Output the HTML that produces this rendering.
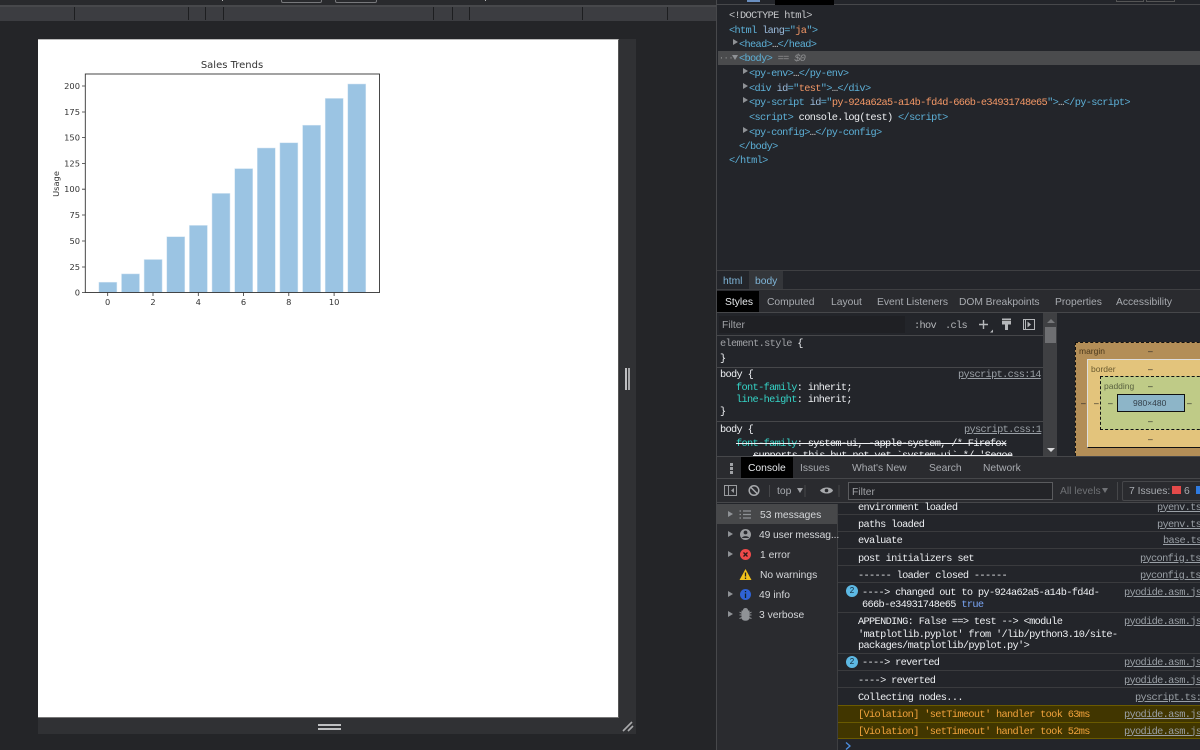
<!DOCTYPE html>
<html lang="en">
<head>
<meta charset="utf-8">
<title>DevTools</title>
<style>
html,body{margin:0;padding:0;width:1200px;height:750px;overflow:hidden;background:#242528}
body{position:relative;font-family:"Liberation Sans",sans-serif;font-size:10px;color:#c4c7c5}
div,span.a{position:absolute;box-sizing:border-box}
.t{position:absolute;white-space:pre;line-height:14px;height:14px}
.m{font-family:"Liberation Mono",monospace;font-size:10.3px;letter-spacing:-.66px;color:#eef0f3;margin-top:1.5px}
.s{font-family:"Liberation Sans",sans-serif;font-size:10.3px;color:#a8abb0;margin-top:1px}
.b{margin-top:0}
.tag{color:#5db0d7}.val{color:#f29766}.att{color:#9bbbdc}
.lnk{color:#9aa0a6;text-decoration:underline}
.prop{color:#35d4c7}
.tri{position:absolute;width:0;height:0;border-left:5px solid #8f9296;border-top:3.5px solid transparent;border-bottom:3.5px solid transparent}
.trid{position:absolute;width:0;height:0;border-top:5px solid #8f9296;border-left:3.5px solid transparent;border-right:3.5px solid transparent}
.ln{position:absolute;left:838px;right:0;height:1px;background:#3a3b3e}
.bar{position:absolute;background:#1d1e20;top:7px;width:1px;height:13px}
</style>
</head>
<body>
<!-- top browser strip -->
<div style="left:0;top:0;width:716px;height:5px;background:#292a2d"></div>
<div style="left:0;top:5px;width:716px;height:2px;background:#47484b"></div>
<div style="left:0;top:7px;width:716px;height:14px;background:#3c3d41"></div>
<div class="bar" style="left:74px"></div><div class="bar" style="left:188px"></div><div class="bar" style="left:205px"></div><div class="bar" style="left:223px"></div><div class="bar" style="left:433px"></div><div class="bar" style="left:452px"></div><div class="bar" style="left:469px"></div><div class="bar" style="left:582px"></div><div class="bar" style="left:667px"></div>
<div style="left:281px;top:-3px;width:41px;height:6px;border:1px solid #77787b;border-radius:2px"></div>
<div style="left:335px;top:-3px;width:42px;height:6px;border:1px solid #77787b;border-radius:2px"></div>
<div style="left:222px;top:0;width:1px;height:1px;background:#bbb"></div>
<div style="left:485px;top:0;width:1px;height:1px;background:#bbb"></div>

<!-- device frame -->
<div style="left:618px;top:39px;width:18px;height:695px;background:#303134"></div>
<div style="left:38px;top:717px;width:598px;height:17px;background:#303134"></div>
<div style="left:38px;top:39px;width:580.5px;height:678.5px;background:#fff;border-top:1px solid #bbb;border-right:1px solid #555;border-bottom:1px solid #777"></div>
<div style="left:625px;top:368px;width:2.3px;height:22px;background:#bfc0c2"></div>
<div style="left:628.3px;top:368px;width:2px;height:22px;background:#a9aaac"></div>
<div style="left:318px;top:724px;width:23px;height:2px;background:#bfc0c2"></div>
<div style="left:318px;top:728px;width:23px;height:2px;background:#bfc0c2"></div>
<svg style="position:absolute;left:620px;top:718px" width="16" height="16"><path d="M3 13 L12 4 M8 13 L13 8" stroke="#a9aaac" stroke-width="1.6" fill="none"/></svg>

<!-- chart -->
<svg style="position:absolute;left:0;top:0" width="640" height="320" font-family="'DejaVu Sans',sans-serif" font-size="8.3" fill="#333">
<g fill="#9bc4e3" stroke="#d5e6f3" stroke-width=".5">
<rect x="98.9" y="282.2" width="18" height="10.3"/>
<rect x="121.5" y="273.9" width="18" height="18.6"/>
<rect x="144.1" y="259.5" width="18" height="33"/>
<rect x="166.8" y="236.7" width="18" height="55.8"/>
<rect x="189.4" y="225.4" width="18" height="67.1"/>
<rect x="212" y="193.4" width="18" height="99.1"/>
<rect x="234.7" y="168.6" width="18" height="123.9"/>
<rect x="257.3" y="148" width="18" height="144.5"/>
<rect x="279.9" y="142.8" width="18" height="149.7"/>
<rect x="302.6" y="125.2" width="18" height="167.3"/>
<rect x="325.2" y="98.4" width="18" height="194.1"/>
<rect x="347.8" y="84" width="18" height="208.5"/>
</g>
<rect x="85.3" y="74" width="294.2" height="218.5" fill="none" stroke="#333" stroke-width=".9"/>
<g stroke="#333" stroke-width=".8">
<path d="M82 86H85M82 112H85M82 137.600H85M82 163.500H85M82 189.200H85M82 215H85M82 241H85M82 267H85M82 292.500H85"/>
<path d="M107.700 292.500V296M153 292.500V296M198.300 292.500V296M243.500 292.500V296M288.800 292.500V296M334.100 292.500V296"/>
</g>
<g text-anchor="end">
<text x="80" y="89">200</text><text x="80" y="115">175</text><text x="80" y="140.700">150</text><text x="80" y="166.500">125</text><text x="80" y="192.200">100</text><text x="80" y="218">75</text><text x="80" y="244">50</text><text x="80" y="270">25</text><text x="80" y="295.500">0</text>
</g>
<g text-anchor="middle">
<text x="107.700" y="305">0</text><text x="153" y="305">2</text><text x="198.300" y="305">4</text><text x="243.500" y="305">6</text><text x="288.800" y="305">8</text><text x="334.100" y="305">10</text>
<text x="232" y="68" font-size="10">Sales Trends</text>
<text transform="translate(59,184) rotate(-90)" font-size="8.300">Usage</text>
</g>
</svg>

<!-- devtools -->
<div style="left:716px;top:0;width:484px;height:750px;background:#23252a;border-left:1px solid #47484b"></div>
<div style="left:717px;top:4px;width:483px;height:1px;background:#47484b"></div>
<div style="left:747px;top:0;width:13px;height:2px;background:#6a8fc0"></div>
<div style="left:775px;top:0;width:59px;height:5px;background:#000"></div>
<div style="left:1116px;top:-3px;width:28px;height:5px;border:1px solid #555"></div>
<div style="left:1146px;top:-3px;width:29px;height:5px;border:1px solid #555"></div>

<!-- elements -->
<div style="left:718px;top:51px;width:482px;height:14px;background:#4a4b4d"></div>
<div style="left:0;top:-1px;width:0;height:0">
<span class="t m" style="left:729px;top:8px;color:#c6c8cb">&lt;!DOCTYPE html&gt;</span>
<span class="t m" style="left:729px;top:23px"><span class="tag">&lt;html</span> <span class="att">lang</span><span class="tag">="</span><span class="val">ja</span><span class="tag">"&gt;</span></span>
<div class="tri" style="left:733px;top:40px"></div>
<span class="t m tag" style="left:739px;top:37.5px">&lt;head&gt;<span style="color:#ddd">…</span>&lt;/head&gt;</span>
<span class="t m" style="left:719px;top:51px;color:#9a9b9d;letter-spacing:0;font-size:8px">···</span>
<div class="trid" style="left:732px;top:56px"></div>
<span class="t m" style="left:739px;top:51.5px"><span class="tag">&lt;body&gt;</span> <span style="color:#8f9092;font-style:italic">== $0</span></span>
<div class="tri" style="left:743px;top:69px"></div>
<span class="t m tag" style="left:749px;top:66px">&lt;py-env&gt;<span style="color:#ddd">…</span>&lt;/py-env&gt;</span>
<div class="tri" style="left:743px;top:84px"></div>
<span class="t m" style="left:749px;top:81px"><span class="tag">&lt;div</span> <span class="att">id</span><span class="tag">="</span><span class="val">test</span><span class="tag">"&gt;</span><span style="color:#ddd">…</span><span class="tag">&lt;/div&gt;</span></span>
<div class="tri" style="left:743px;top:98px"></div>
<span class="t m" style="left:749px;top:95px"><span class="tag">&lt;py-script</span> <span class="att">id</span><span class="tag">="</span><span class="val">py-924a62a5-a14b-fd4d-666b-e34931748e65</span><span class="tag">"&gt;</span><span style="color:#ddd">…</span><span class="tag">&lt;/py-script&gt;</span></span>
<span class="t m" style="left:749px;top:110px"><span class="tag">&lt;script&gt;</span> console.log(test) <span class="tag">&lt;/script&gt;</span></span>
<div class="tri" style="left:743px;top:128px"></div>
<span class="t m tag" style="left:749px;top:125px">&lt;py-config&gt;<span style="color:#ddd">…</span>&lt;/py-config&gt;</span>
<span class="t m tag" style="left:739px;top:139px">&lt;/body&gt;</span>
<span class="t m tag" style="left:729px;top:153px">&lt;/html&gt;</span>
</div>

<!-- breadcrumb -->
<div style="left:717px;top:270px;width:483px;height:1px;background:#3e3f42"></div>
<div style="left:749px;top:271px;width:34px;height:18px;background:#34363a"></div>
<div style="left:717px;top:289px;width:483px;height:1px;background:#3e3f42"></div>
<span class="t s" style="left:723px;top:274px;color:#7fb5d8">html</span>
<span class="t s" style="left:755px;top:274px;color:#7fb5d8">body</span>

<!-- style tabs -->
<div style="left:717px;top:290px;width:483px;height:23px;background:#2a2b2f"></div>
<div style="left:717px;top:291px;width:42px;height:21px;background:#000"></div>
<div style="left:717px;top:312px;width:483px;height:1px;background:#46474a"></div>
<span class="t s" style="left:725px;top:295px;color:#e8eaed">Styles</span>
<span class="t s" style="left:767px;top:295px">Computed</span>
<span class="t s" style="left:831px;top:295px">Layout</span>
<span class="t s" style="left:877px;top:295px">Event Listeners</span>
<span class="t s" style="left:959px;top:295px;letter-spacing:-.05px">DOM Breakpoints</span>
<span class="t s" style="left:1055px;top:295px">Properties</span>
<span class="t s" style="left:1116px;top:295px">Accessibility</span>

<!-- filter row -->
<div style="left:719px;top:316px;width:186px;height:17px;background:#1f2024"></div>
<span class="t s" style="left:722px;top:318px;color:#a0a2a6">Filter</span>
<span class="t m" style="left:914px;top:317px;color:#b5b7ba">:hov</span>
<span class="t m" style="left:945px;top:317px;color:#b5b7ba">.cls</span>
<svg style="position:absolute;left:976px;top:316px" width="62" height="18"><path d="M3 8.500H12M7.500 4V13" stroke="#b5b7ba" stroke-width="1.400" fill="none"/><path d="M14 16.500L17 16.500L17 13.500Z" fill="#b5b7ba"/><path d="M26 2.500H35V8.500H26Z M29 8.500H32V14H29Z" fill="#b5b7ba"/><path d="M26 4.500H35" stroke="#555"/><rect x="47.500" y="3.500" width="11" height="10" fill="none" stroke="#b5b7ba"/><path d="M51.500 5.500L55 8.500L51.500 11.500Z" fill="#b5b7ba"/><path d="M49.500 3.500V13.500" stroke="#b5b7ba"/></svg>
<div style="left:717px;top:335px;width:326px;height:1px;background:#46474a"></div>

<!-- css rules -->
<div style="left:717px;top:336px;width:326px;height:120px;overflow:hidden">
<div style="left:0;top:-1px;width:326px;height:121px">
<span class="t m" style="left:3px;top:0.5px;color:#a0a2a6">element.style <span style="color:#e8eaed">{</span></span>
<span class="t m" style="left:3px;top:15px">}</span>
<span class="t m" style="left:3px;top:31px">body {</span>
<span class="t m lnk" style="left:241px;top:31px">pyscript.css:14</span>
<span class="t m" style="left:19px;top:44.5px"><span class="prop">font-family</span>: inherit;</span>
<span class="t m" style="left:19px;top:56px"><span class="prop">line-height</span>: inherit;</span>
<span class="t m" style="left:3px;top:68px">}</span>
<span class="t m" style="left:3px;top:86px">body {</span>
<span class="t m lnk" style="left:247px;top:86px">pyscript.css:1</span>
<span class="t m" style="left:19px;top:100px;text-decoration:line-through"><span class="prop">font-family</span>: system-ui, -apple-system, /* Firefox</span>
<span class="t m" style="left:36px;top:112px;text-decoration:line-through">supports this but not yet `system-ui` */ 'Segoe</span>
</div>
<div style="left:0;top:31px;width:326px;height:1px;background:#46474a"></div>
<div style="left:0;top:85px;width:326px;height:1px;background:#46474a"></div>
</div>

<!-- scrollbar -->
<div style="left:1043px;top:313px;width:14px;height:143px;background:#3f4043"></div>
<div style="left:1045px;top:327px;width:11px;height:16px;background:#6e6f72"></div>
<div style="left:1047px;top:319px;width:0;height:0;border-bottom:4px solid #77787b;border-left:4px solid transparent;border-right:4px solid transparent"></div>
<div style="left:1047px;top:448px;width:0;height:0;border-top:4px solid #d5d6d8;border-left:4px solid transparent;border-right:4px solid transparent"></div>

<!-- box model -->
<div style="left:1075px;top:342px;width:140px;height:114px;background:#b38e57;border:1px dashed #111;border-bottom:0"></div>
<div style="left:1087px;top:359px;width:120px;height:89px;background:#e3c47c;border:1px solid #111;border-top-color:#ddd;border-left-color:#ddd"></div>
<div style="left:1100px;top:376px;width:110px;height:54px;background:#bfcb87;border:1px dashed #111"></div>
<div style="left:1117px;top:394px;width:68px;height:18px;background:#8db5c8;border:1px solid #111"></div>
<span class="t s b" style="left:1133px;top:396px;color:#34404a;font-size:8.500px">980×480</span>
<span class="t s b" style="left:1079px;top:344px;color:#4c3a1d;font-size:8.500px">margin</span>
<span class="t s b" style="left:1091px;top:362px;color:#6a5a30;font-size:8.500px">border</span>
<span class="t s b" style="left:1104px;top:379px;color:#5a6240;font-size:8.500px">padding</span>
<span class="t s b" style="left:1148px;top:344px;color:#222;font-size:8.500px">–</span>
<span class="t s b" style="left:1148px;top:362px;color:#222;font-size:8.500px">–</span>
<span class="t s b" style="left:1148px;top:379px;color:#222;font-size:8.500px">–</span>
<span class="t s b" style="left:1148px;top:414px;color:#222;font-size:8.500px">–</span>
<span class="t s b" style="left:1148px;top:432px;color:#222;font-size:8.500px">–</span>
<span class="t s b" style="left:1081px;top:396px;color:#222;font-size:8.500px">–</span>
<span class="t s b" style="left:1094px;top:396px;color:#222;font-size:8.500px">–</span>
<span class="t s b" style="left:1108px;top:396px;color:#222;font-size:8.500px">–</span>
<span class="t s b" style="left:1187px;top:396px;color:#222;font-size:8.500px">–</span>

<!-- console tabs -->
<div style="left:717px;top:456px;width:483px;height:23px;background:#2a2b2f;border-top:1px solid #46474a;border-bottom:1px solid #46474a"></div>
<div style="left:741px;top:457px;width:52px;height:21px;background:#000"></div>
<div style="left:730px;top:463px;width:2.500px;height:2.500px;background:#a0a2a6"></div>
<div style="left:730px;top:467px;width:2.500px;height:2.500px;background:#a0a2a6"></div>
<div style="left:730px;top:471px;width:2.500px;height:2.500px;background:#a0a2a6"></div>
<span class="t s" style="left:748px;top:461px;color:#e8eaed">Console</span>
<span class="t s" style="left:800px;top:461px">Issues</span>
<span class="t s" style="left:852px;top:461px">What's New</span>
<span class="t s" style="left:929px;top:461px">Search</span>
<span class="t s" style="left:983px;top:461px">Network</span>

<!-- console toolbar -->
<div style="left:717px;top:479px;width:483px;height:24px;background:#2a2b2f;border-bottom:1px solid #46474a"></div>
<svg style="position:absolute;left:722px;top:483px" width="118" height="16"><rect x="2.500" y="2.500" width="12" height="10" fill="none" stroke="#9a9c9f"/><path d="M6.500 2.500V12.500" stroke="#9a9c9f"/><path d="M12 5L9 7.500L12 10Z" fill="#9a9c9f"/><circle cx="32" cy="7.500" r="4.800" fill="none" stroke="#a8aaad" stroke-width="1.500"/><path d="M28.500 4L35.500 11" stroke="#a8aaad" stroke-width="1.500"/><path d="M83 2V14" stroke="#46474a"/><path d="M98 7.500C101 3.500 109 3.500 111 7.500C109 11.500 101 11.500 98 7.500Z" fill="#a8aaad"/><circle cx="104.500" cy="7.500" r="1.800" fill="#2a2b2f"/><path d="M117 2V14" stroke="#46474a"/><path d="M47.500 2V14" stroke="#46474a"/></svg>
<span class="t s" style="left:777px;top:484px">top</span>
<div class="trid" style="left:797px;top:488px;border-top-color:#a0a2a6"></div>
<div style="left:848px;top:482px;width:205px;height:18px;border:1px solid #5a5b5e;background:#232428"></div>
<span class="t s" style="left:852px;top:484.500px;color:#a0a2a6">Filter</span>
<span class="t s" style="left:1060px;top:484px;color:#6f7175">All levels</span>
<div class="trid" style="left:1102px;top:488px;border-top-color:#6f7175"></div>
<div style="left:1117px;top:482px;width:1px;height:18px;background:#46474a"></div>
<div style="left:1122px;top:481px;width:90px;height:20px;border:1px solid #46474a;border-radius:2px"></div>
<span class="t s" style="left:1129px;top:484px">7 Issues:</span>
<div style="left:1172px;top:486px;width:9px;height:8px;background:#e34a4a"></div>
<span class="t s" style="left:1184px;top:484px">6</span>
<div style="left:1196px;top:486px;width:4px;height:8px;background:#2f7be0"></div>

<!-- console sidebar -->
<div style="left:717px;top:504px;width:121px;height:246px;background:#2a2b2f;border-right:1px solid #3e3f42"></div>
<div style="left:717px;top:504px;width:120px;height:20px;background:#47484a"></div>
<div class="tri" style="left:728px;top:511px"></div>
<div class="tri" style="left:728px;top:531px"></div>
<div class="tri" style="left:728px;top:551px"></div>
<div class="tri" style="left:728px;top:591px"></div>
<div class="tri" style="left:728px;top:611px"></div>
<svg style="position:absolute;left:738px;top:505px" width="16" height="120">
<path d="M1.500 6H3M1.500 9.500H3M1.500 13H3M5 6H13M5 9.500H13M5 13H13" stroke="#8f9296" stroke-width="1.300"/>
<circle cx="7.500" cy="29.500" r="5.500" fill="#9a9c9f"/><circle cx="7.500" cy="27.500" r="1.900" fill="#2a2b2f"/><path d="M3.800 33C5 30.500 10 30.500 11.200 33Z" fill="#2a2b2f"/>
<circle cx="7.500" cy="49.500" r="5.500" fill="#ee4a4a"/><path d="M5.500 47.500L9.500 51.500M9.500 47.500L5.500 51.500" stroke="#2a1a1a" stroke-width="1.300"/>
<path d="M7.500 64L13.500 75H1.500Z" fill="#f1c21b"/><path d="M7.500 67.500V71.500M7.500 72.500V74" stroke="#222" stroke-width="1.300"/>
<circle cx="7.500" cy="89.500" r="5.500" fill="#2f62d4"/><path d="M7.500 86V87.200M7.500 88.500V93" stroke="#122" stroke-width="1.300"/>
<path d="M4 106H11V113C11 116 4 116 4 113ZM5.500 105C6 103 9 103 9.500 105Z M1.500 107L4 108.500M13.500 107L11 108.500M1.500 110H4M13.500 110H11M1.500 113.500L4 112.500M13.500 113.500L11 112.500" fill="#8f9296" stroke="#8f9296"/>
</svg>
<span class="t s" style="left:760px;top:507.500px;color:#d5d7da">53 messages</span>
<span class="t s" style="left:759px;top:527.500px;color:#d5d7da;letter-spacing:-.1px">49 user messag...</span>
<span class="t s" style="left:760px;top:547.500px;color:#d5d7da">1 error</span>
<span class="t s" style="left:760px;top:567.500px;color:#d5d7da">No warnings</span>
<span class="t s" style="left:759px;top:587.500px;color:#d5d7da">49 info</span>
<span class="t s" style="left:759px;top:607.500px;color:#d5d7da">3 verbose</span>

<!-- console messages -->
<div class="ln" style="top:514px"></div><div class="ln" style="top:531px"></div><div class="ln" style="top:548px"></div><div class="ln" style="top:565px"></div><div class="ln" style="top:582px"></div><div class="ln" style="top:612px"></div><div class="ln" style="top:653px"></div><div class="ln" style="top:670px"></div><div class="ln" style="top:687px"></div>
<div style="left:838px;top:705px;width:362px;height:17px;background:#413600;border-top:1px solid #6a5a00"></div>
<div style="left:838px;top:722px;width:362px;height:17px;background:#413600;border-top:1px solid #6a5a00;border-bottom:1px solid #6a5a00"></div>
<span class="t m" style="left:858px;top:499px">environment loaded</span><span class="t m lnk" style="left:1157px;top:499px">pyenv.ts</span>
<span class="t m" style="left:858px;top:516px">paths loaded</span><span class="t m lnk" style="left:1157px;top:516px">pyenv.ts</span>
<span class="t m" style="left:858px;top:532px">evaluate</span><span class="t m lnk" style="left:1163px;top:532px">base.ts</span>
<span class="t m" style="left:858px;top:550px">post initializers set</span><span class="t m lnk" style="left:1140px;top:550px">pyconfig.ts</span>
<span class="t m" style="left:858px;top:567px">------ loader closed ------</span><span class="t m lnk" style="left:1140px;top:567px">pyconfig.ts</span>
<div style="left:846px;top:585px;width:12px;height:12px;border-radius:50%;background:#5db9e4;color:#123;font-size:8px;line-height:12px;text-align:center">2</div>
<span class="t m" style="left:862px;top:584px">----&gt; changed out to py-924a62a5-a14b-fd4d-</span><span class="t m lnk" style="left:1124px;top:584px">pyodide.asm.js</span>
<span class="t m" style="left:862px;top:596px">666b-e34931748e65 <span style="color:#7aa6f5">true</span></span>
<span class="t m" style="left:858px;top:613px">APPENDING: False ==&gt; test --&gt; &lt;module</span><span class="t m lnk" style="left:1124px;top:613px">pyodide.asm.js</span>
<span class="t m" style="left:858px;top:626px">'matplotlib.pyplot' from '/lib/python3.10/site-</span>
<span class="t m" style="left:858px;top:637px">packages/matplotlib/pyplot.py'&gt;</span>
<div style="left:846px;top:656px;width:12px;height:12px;border-radius:50%;background:#5db9e4;color:#123;font-size:8px;line-height:12px;text-align:center">2</div>
<span class="t m" style="left:862px;top:654px">----&gt; reverted</span><span class="t m lnk" style="left:1124px;top:654px">pyodide.asm.js</span>
<span class="t m" style="left:858px;top:672px">----&gt; reverted</span><span class="t m lnk" style="left:1124px;top:672px">pyodide.asm.js</span>
<span class="t m" style="left:858px;top:689px">Collecting nodes...</span><span class="t m lnk" style="left:1135px;top:689px">pyscript.ts:</span>
<span class="t m" style="left:858px;top:706px;color:#f2a33c">[Violation] 'setTimeout' handler took 63ms</span><span class="t m lnk" style="left:1124px;top:706px">pyodide.asm.js</span>
<span class="t m" style="left:858px;top:723px;color:#f2a33c">[Violation] 'setTimeout' handler took 52ms</span><span class="t m lnk" style="left:1124px;top:723px">pyodide.asm.js</span>
<svg style="position:absolute;left:844px;top:741px" width="10" height="9"><path d="M2 1.500L6 5L2 8.500" fill="none" stroke="#4d8fe0" stroke-width="1.300"/></svg>
</body>
</html>
